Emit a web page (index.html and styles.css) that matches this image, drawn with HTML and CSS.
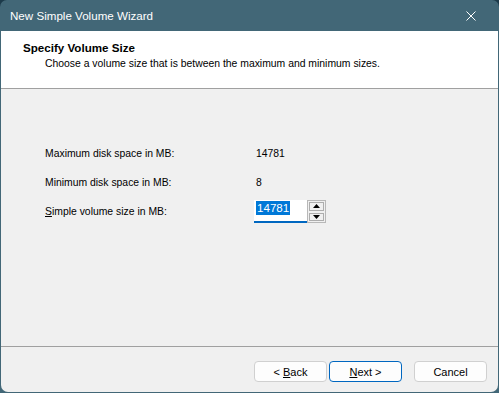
FILE: index.html
```html
<!DOCTYPE html>
<html lang="en">
    <head>
        <meta charset="UTF-8" />
        <meta name="viewport" content="width=device-width, initial-scale=1.0" />
        <title>New Simple Volume Wizard</title>
        <link rel="stylesheet" href="styles.css">
    </head>
    <body>
        <div class="window">
            <div class="titlebar">
                <span class="title">New Simple Volume Wizard</span>
                <span class="close">
                    <svg width="10" height="10" viewBox="0 0 10 10">
                        <path d="M0.5 0.5 L9.5 9.5 M9.5 0.5 L0.5 9.5" stroke="#ffffff" stroke-width="1" />
                    </svg>
                </span>
            </div>
            <div class="client">
                <div class="header">
                    <h1>Specify Volume Size</h1>
                    <p>Choose a volume size that is between the maximum and minimum sizes.</p>
                </div>
                <div class="content">
                    <div class="fields">
                        <span>Maximum disk space in MB:</span>
                        <span class="value">14781</span>
                        <span>Minimum disk space in MB:</span>
                        <span class="value">8</span>
                        <span><u>S</u>imple volume size in MB:</span>
                        <div class="spin">
                            <div class="spin-input"><span class="selected">14781</span></div>
                            <div class="spin-buttons">
                                <button class="spin-btn">
                                    <svg width="7" height="4" viewBox="0 0 7 4"><path d="M3.5 0 L7 4 L0 4 Z" fill="#000" /></svg>
                                </button>
                                <button class="spin-btn">
                                    <svg width="7" height="4" viewBox="0 0 7 4"><path d="M0 0 L7 0 L3.5 4 Z" fill="#000" /></svg>
                                </button>
                            </div>
                        </div>
                    </div>
                </div>
                <div class="footer">
                    <button class="btn">&lt; <u>B</u>ack</button>
                    <button class="btn default"><u>N</u>ext &gt;</button>
                    <button class="btn cancel">Cancel</button>
                </div>
            </div>
        </div>
    </body>
</html>
```

FILE: styles.css
```css
html, body {
    margin: 0;
    padding: 0;
    background: #1c3a4a;
}

.window {
    width: 499px;
    height: 393px;
    display: flex;
    flex-direction: column;
    background: #426777;
    border-radius: 7px 7px 0 0;
    font-family: "Liberation Sans", Arial, sans-serif;
    font-size: 10.4px;
    color: #000000;
    box-sizing: border-box;
}

.titlebar {
    height: 31px;
    display: flex;
    align-items: center;
    justify-content: space-between;
    padding: 0 23px 0 10px;
    color: #ffffff;
    font-size: 11.6px;
}

.close {
    display: flex;
}

.client {
    flex: 1;
    margin: 0 1px 1px 1px;
    background: #f0f0f0;
    border-radius: 0 0 7px 7px;
    display: flex;
    flex-direction: column;
}

.header {
    height: 58px;
    background: #ffffff;
    border-bottom: 1px solid #a0a0a0;
    padding: 10px 0 0 22px;
    box-sizing: border-box;
}

.header h1 {
    margin: 0;
    font-size: 11.6px;
    font-weight: bold;
    line-height: 13px;
}

.header p {
    margin: 3px 0 0 22px;
    line-height: 13px;
}

.content {
    flex: 1;
    padding: 50px 0 0 44px;
}

.fields {
    display: grid;
    grid-template-columns: 211px auto;
    grid-auto-rows: 29px;
    align-items: center;
}

.fields > span {
    line-height: 13px;
}

.spin {
    display: flex;
    margin-left: -2px;
    height: 23px;
}

.spin-input {
    width: 53px;
    height: 23px;
    box-sizing: border-box;
    background: #ffffff;
    border-bottom: 2px solid #0067c0;
    padding: 1px 0 0 2px;
}

.selected {
    display: inline-block;
    background: #0078d7;
    color: #ffffff;
    font-size: 11.6px;
    line-height: 14px;
    padding: 0 1px;
}

.spin-buttons {
    width: 19px;
    display: flex;
    flex-direction: column;
    border: 1px solid #b8b8b8;
    box-sizing: border-box;
    height: 23px;
}

.spin-btn {
    flex: 1;
    margin: 1px;
    padding: 0;
    border: 1px solid #adadad;
    background: #f0f0f0;
    display: flex;
    align-items: center;
    justify-content: center;
}

.footer {
    height: 46px;
    border-top: 1px solid #a0a0a0;
    display: flex;
    align-items: flex-start;
    padding: 14px 0 0 253px;
    box-sizing: border-box;
}

.btn {
    width: 73px;
    height: 21px;
    border: 1px solid #d0d0d0;
    border-radius: 4px;
    background: #fdfdfd;
    font-family: "Liberation Sans", Arial, sans-serif;
    font-size: 11px;
    color: #000000;
    padding: 0;
    margin-right: 2px;
}

.btn.default {
    border-color: #0067c0;
}

.btn.cancel {
    margin-left: 10px;
}
```
